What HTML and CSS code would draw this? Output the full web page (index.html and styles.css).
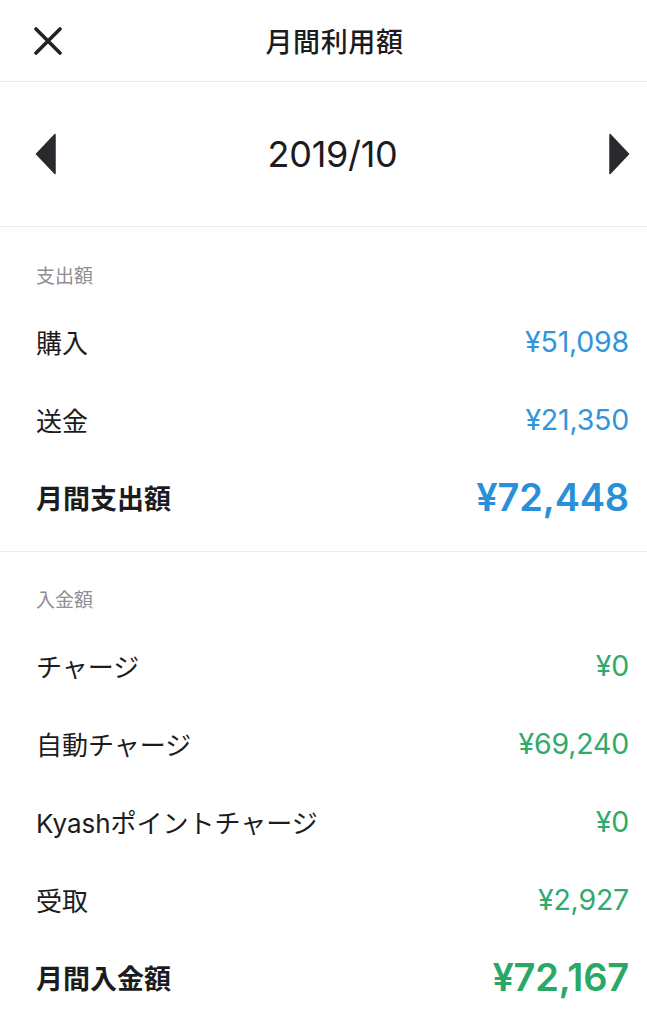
FILE: index.html
```html
<!DOCTYPE html>
<html lang="ja">
<head>
<meta charset="utf-8">
<title>月間利用額</title>
<link rel="stylesheet" href="styles.css">
</head>
<body>
<div class="screen">
  <header class="topbar">
    <button class="close" aria-label="閉じる">
      <svg width="28" height="28" viewBox="0 0 28 28"><path d="M2 2 L26 26 M26 2 L2 26" stroke="#222" stroke-width="3.6" stroke-linecap="round" fill="none"/></svg>
    </button>
    <h1 class="title">月間利用額</h1>
  </header>
  <nav class="month-nav">
    <svg class="arrow" width="22" height="42" viewBox="0 0 22 42"><path d="M20 1.5 L20 40.5 L1.5 21 Z" fill="#2a2a2e" stroke="#2a2a2e" stroke-width="1.5" stroke-linejoin="round"/></svg>
    <div class="month">2019/10</div>
    <svg class="arrow" width="22" height="42" viewBox="0 0 22 42"><path d="M2 1.5 L2 40.5 L20.5 21 Z" fill="#2a2a2e" stroke="#2a2a2e" stroke-width="1.5" stroke-linejoin="round"/></svg>
  </nav>
  <section class="section">
    <div class="section-label">支出額</div>
    <div class="row"><span class="name">購入</span><span class="amount out">¥51,098</span></div>
    <div class="row"><span class="name">送金</span><span class="amount out">¥21,350</span></div>
    <div class="row total"><span class="name">月間支出額</span><span class="amount out">¥72,448</span></div>
  </section>
  <section class="section">
    <div class="section-label">入金額</div>
    <div class="row"><span class="name">チャージ</span><span class="amount in">¥0</span></div>
    <div class="row"><span class="name">自動チャージ</span><span class="amount in">¥69,240</span></div>
    <div class="row"><span class="name">Kyashポイントチャージ</span><span class="amount in">¥0</span></div>
    <div class="row"><span class="name">受取</span><span class="amount in">¥2,927</span></div>
    <div class="row total"><span class="name">月間入金額</span><span class="amount in">¥72,167</span></div>
  </section>
</div>
</body>
</html>
```

FILE: styles.css
```css
* { box-sizing: border-box; }
html, body { margin: 0; padding: 0; background: #fff; }
body {
  font-family: Inter, "Noto Sans CJK JP", sans-serif;
  color: #1c1c1e;
}
.screen { width: 647px; }

.topbar {
  height: 82px;
  border-bottom: 1px solid #ececec;
  display: grid;
  grid-template-columns: 1fr auto 1fr;
  align-items: center;
  padding: 0 0 0 34px;
}
.close {
  justify-self: start;
  border: 0;
  background: none;
  padding: 0;
  width: 28px;
  height: 28px;
  display: flex;
  margin-top: 1px;
}
.title {
  margin: 0;
  font-size: 27px;
  font-weight: 500;
  font-family: "Noto Sans CJK JP", sans-serif;
  color: #1c1c1e;
  letter-spacing: 0.6px;
  transform: translateX(-6px);
}

.month-nav {
  height: 145px;
  border-bottom: 1px solid #ececec;
  display: flex;
  align-items: center;
  justify-content: space-between;
  padding: 0 17px 0 35px;
}
.month {
  font-size: 36px;
  font-weight: 400;
  letter-spacing: -0.3px;
  color: #1c1c1e;
}

.section {
  padding: 36px 18px 15px 36px;
  border-bottom: 1px solid #ececec;
}
.section:last-child { border-bottom: 0; padding-top: 35px; }
.section-label {
  font-family: "Noto Sans CJK JP", sans-serif;
  font-size: 19px;
  line-height: 24px;
  color: #8e8e93;
  margin-bottom: 15px;
}
.row {
  height: 78px;
  display: flex;
  align-items: center;
  justify-content: space-between;
}
.name {
  font-size: 26px;
  color: #1c1c1e;
}
.amount {
  font-size: 28.5px;
  letter-spacing: -0.2px;
}
.amount.out { color: #3095da; }
.amount.in { color: #2fab6b; }
.total .name {
  font-size: 27px;
  font-weight: 700;
  font-family: "Noto Sans CJK JP", sans-serif;
}
.total .amount {
  font-size: 38px;
  font-weight: 600;
}
.total .amount.out { color: #2a8fd9; }
.total .amount.in { color: #2aa866; }
```
